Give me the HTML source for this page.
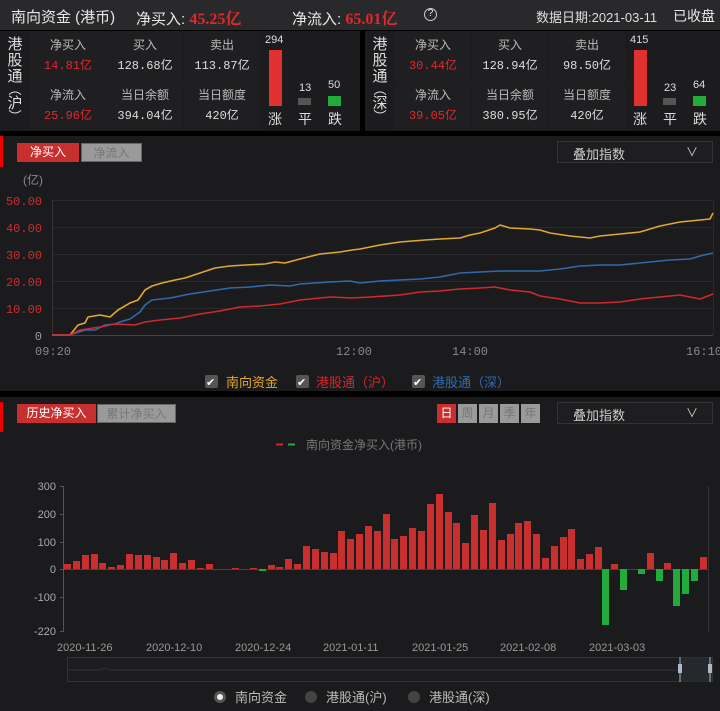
<!DOCTYPE html>
<html><head><meta charset="utf-8"><style>
*{margin:0;padding:0;box-sizing:border-box}
body{width:720px;height:711px;background:#000;font-family:"Liberation Sans","Noto Sans CJK SC",sans-serif;color:#ccc;position:relative;overflow:hidden}
.a{position:absolute;white-space:nowrap}
.top{left:0;top:0;width:720px;height:30px;background:#29292b;font-size:15px;color:#e8e8e8}
.blk{top:31px;height:100px;background:#1c1c1e}
.cell{position:absolute;width:76px;height:49px;background:#1f1f21;text-align:center;font-size:12px;color:#bbb}
.cell div:first-child{margin-top:5px}
.cell .v{font-family:"Liberation Mono","Noto Sans CJK SC",monospace;font-size:12px;color:#ddd;margin-top:3px}
.red{color:#e0282d!important}
.vl{font-size:15px;color:#ddd;width:30px;height:100px;background:#1c1c1e;text-align:center;padding-top:6px;line-height:16px;white-space:normal}
.vl span{display:block;height:16px}
.vl .p{font-size:13px;line-height:10px;height:11px}
.sec{left:0;width:720px;background:#1b1b1d}
.btn{position:absolute;height:19px;font-size:12px;text-align:center;line-height:19px}
</style></head><body>
<div class="a top">
 <span class="a" style="left:11px;top:6px">南向资金 (港币)</span>
 <span class="a" style="left:136px;top:6px">净买入: <b style="color:#e0282d;font-family:'Liberation Serif','Noto Serif CJK SC',serif;font-size:16px">45.25亿</b></span>
 <span class="a" style="left:292px;top:6px">净流入: <b style="color:#e0282d;font-family:'Liberation Serif','Noto Serif CJK SC',serif;font-size:16px">65.01亿</b></span>
 <span class="a" style="left:424px;top:8px;width:13px;height:13px;border:1.5px solid #ccc;border-radius:50%;font-size:10px;line-height:10px;text-align:center">?</span>
 <span class="a" style="left:536px;top:7px;font-size:13px;color:#ddd">数据日期:2021-03-11</span>
 <span class="a" style="left:673px;top:6px;font-size:14px">已收盘</span>
</div>

<div class="a blk" style="left:0;width:360px">
 <div class="a vl" style="left:0;top:0"><span>港</span><span>股</span><span>通</span><span class="p">︵</span><span>沪</span><span class="p">︶</span></div>
 <div class="cell" style="left:30px;top:0"><div>净买入</div><div class="v red">14.81亿</div></div>
 <div class="cell" style="left:107px;top:0"><div>买入</div><div class="v">128.68亿</div></div>
 <div class="cell" style="left:184px;top:0"><div>卖出</div><div class="v">113.87亿</div></div>
 <div class="cell" style="left:30px;top:50px"><div>净流入</div><div class="v red">25.96亿</div></div>
 <div class="cell" style="left:107px;top:50px"><div>当日余额</div><div class="v">394.04亿</div></div>
 <div class="cell" style="left:184px;top:50px"><div>当日额度</div><div class="v">420亿</div></div>
 <span class="a" style="left:265px;top:3px;font-size:11px;color:#ddd">294</span>
 <div class="a" style="left:269px;top:19px;width:13px;height:56px;background:#e0302f"></div>
 <span class="a" style="left:268px;top:78px;font-size:14px;color:#ddd">涨</span>
 <span class="a" style="left:299px;top:51px;font-size:11px;color:#ddd">13</span>
 <div class="a" style="left:298px;top:67px;width:13px;height:7px;background:#555"></div>
 <span class="a" style="left:298px;top:78px;font-size:14px;color:#ddd">平</span>
 <span class="a" style="left:328px;top:48px;font-size:11px;color:#ddd">50</span>
 <div class="a" style="left:328px;top:65px;width:13px;height:10px;background:#22aa3a"></div>
 <span class="a" style="left:328px;top:78px;font-size:14px;color:#ddd">跌</span>
</div>

<div class="a blk" style="left:365px;width:355px">
 <div class="a vl" style="left:0;top:0"><span>港</span><span>股</span><span>通</span><span class="p">︵</span><span>深</span><span class="p">︶</span></div>
 <div class="cell" style="left:30px;top:0"><div>净买入</div><div class="v red">30.44亿</div></div>
 <div class="cell" style="left:107px;top:0"><div>买入</div><div class="v">128.94亿</div></div>
 <div class="cell" style="left:184px;top:0"><div>卖出</div><div class="v">98.50亿</div></div>
 <div class="cell" style="left:30px;top:50px"><div>净流入</div><div class="v red">39.05亿</div></div>
 <div class="cell" style="left:107px;top:50px"><div>当日余额</div><div class="v">380.95亿</div></div>
 <div class="cell" style="left:184px;top:50px"><div>当日额度</div><div class="v">420亿</div></div>
 <span class="a" style="left:265px;top:3px;font-size:11px;color:#ddd">415</span>
 <div class="a" style="left:269px;top:19px;width:13px;height:56px;background:#e0302f"></div>
 <span class="a" style="left:268px;top:78px;font-size:14px;color:#ddd">涨</span>
 <span class="a" style="left:299px;top:51px;font-size:11px;color:#ddd">23</span>
 <div class="a" style="left:298px;top:67px;width:13px;height:7px;background:#555"></div>
 <span class="a" style="left:298px;top:78px;font-size:14px;color:#ddd">平</span>
 <span class="a" style="left:328px;top:48px;font-size:11px;color:#ddd">64</span>
 <div class="a" style="left:328px;top:65px;width:13px;height:10px;background:#22aa3a"></div>
 <span class="a" style="left:328px;top:78px;font-size:14px;color:#ddd">跌</span>
</div>

<div class="a sec" style="top:136px;height:255px">
 <div class="a" style="left:0;top:0;width:3px;height:31px;background:#e00"></div>
 <div class="btn" style="left:17px;top:7px;width:62px;background:#c8302f;color:#fff">净买入</div>
 <div class="btn" style="left:81px;top:7px;width:61px;background:#9a9a9a;color:#777;border:1px solid #666">净流入</div>
 <div class="a" style="left:557px;top:5px;width:156px;height:22px;background:#1e1e20;border:1px solid #333;font-size:13px;color:#ccc;padding:2px 0 0 15px">叠加指数<span style="position:absolute;right:14px;top:1px;font-size:12px">∨</span></div>
</div>
<div class="a sec" style="top:397px;height:314px">
 <div class="a" style="left:0;top:5px;width:3px;height:30px;background:#e00"></div>
 <div class="btn" style="left:17px;top:7px;width:79px;background:#c8302f;color:#fff">历史净买入</div>
 <div class="btn" style="left:97px;top:7px;width:79px;background:#9a9a9a;color:#777;border:1px solid #666">累计净买入</div>
 <div class="btn" style="left:437px;top:7px;width:19px;background:#c8302f;color:#fff">日</div>
 <div class="btn" style="left:458px;top:7px;width:19px;background:#9a9a9a;color:#777">周</div>
 <div class="btn" style="left:479px;top:7px;width:19px;background:#9a9a9a;color:#777">月</div>
 <div class="btn" style="left:500px;top:7px;width:19px;background:#9a9a9a;color:#777">季</div>
 <div class="btn" style="left:521px;top:7px;width:19px;background:#9a9a9a;color:#777">年</div>
 <div class="a" style="left:557px;top:5px;width:156px;height:22px;background:#1e1e20;border:1px solid #333;font-size:13px;color:#ccc;padding:2px 0 0 15px">叠加指数<span style="position:absolute;right:14px;top:1px;font-size:12px">∨</span></div>
</div>

<svg class="a" style="left:0;top:0" width="720" height="711" font-family="Liberation Sans, Noto Sans CJK SC, sans-serif">
 <g stroke="#2a2a2c" stroke-width="1">
  <line x1="52" y1="200.5" x2="713" y2="200.5"/><line x1="52" y1="227.5" x2="713" y2="227.5"/><line x1="52" y1="254.5" x2="713" y2="254.5"/><line x1="52" y1="281.5" x2="713" y2="281.5"/><line x1="52" y1="308.5" x2="713" y2="308.5"/>
  <line x1="713.5" y1="200" x2="713.5" y2="335"/>
 </g>
 <line x1="52.5" y1="200" x2="52.5" y2="335" stroke="#333"/>
 <line x1="52" y1="335.5" x2="713" y2="335.5" stroke="#444"/>
 <g font-size="12" fill="#c8302f" font-family="Liberation Mono, monospace">
  <text x="42" y="205" text-anchor="end">50.00</text><text x="42" y="232" text-anchor="end">40.00</text><text x="42" y="259" text-anchor="end">30.00</text><text x="42" y="286" text-anchor="end">20.00</text><text x="42" y="313" text-anchor="end">10.00</text>
  <text x="42" y="340" text-anchor="end" fill="#999">0</text>
 </g>
 <text x="23" y="184" font-size="12" fill="#888">(亿)</text>
 <g font-size="12" fill="#888" font-family="Liberation Mono, monospace">
  <text x="35" y="355">09:20</text><text x="336" y="355">12:00</text><text x="452" y="355">14:00</text><text x="686" y="355">16:10</text>
 </g>
 <g fill="none" stroke-width="1.6" stroke-linejoin="round">
  <polyline stroke="#e0a830" points="52,335 70,335 78,325 85,323 88,317 100,315 110,317 118,310 130,303 138,300 145,290 152,286 162,283 175,280 185,278 200,273 215,268 230,266 245,265 265,264 275,262 285,263 300,259 320,254 340,252 352,250 360,249 380,245 400,242 425,240 440,239 460,238 470,235 480,233 495,228 500,225 510,228 530,229 540,230 550,233 570,236 580,237 590,238 600,236 620,234 640,232 660,226 680,222 690,221 700,220 710,219 713,213"/>
  <polyline stroke="#2f6aad" points="52,335 70,335 85,330 95,330 105,325 115,324 120,322 130,319 140,312 145,305 152,300 170,298 190,294 210,291 230,288 250,287 270,285 290,286 300,284 330,282 350,281 360,283 380,281 400,280 420,279 440,277 460,273 500,271 540,271 560,269 580,266 600,265 620,265 650,262 670,260 690,259 700,256 713,253"/>
  <polyline stroke="#d0282d" points="52,335 70,335 80,330 100,327 115,324 135,325 145,322 160,320 180,318 200,314 220,311 240,307 260,306 280,304 300,300 330,297 352,298 370,297 400,295 420,292 440,291 460,289 480,288 495,287 510,290 530,292 540,296 560,299 580,303 600,303 620,302 640,299 660,297 680,295 690,297 700,299 713,294"/>
 </g>
 <g font-size="13">
  <rect x="205" y="375" width="13" height="13" rx="2" fill="#555"/><text x="206" y="386" fill="#fff" font-size="11">✔</text><text x="226" y="387" fill="#e0a830">南向资金</text>
  <rect x="296" y="375" width="13" height="13" rx="2" fill="#555"/><text x="297" y="386" fill="#fff" font-size="11">✔</text><text x="316" y="387" fill="#d0282d">港股通（沪）</text>
  <rect x="412" y="375" width="13" height="13" rx="2" fill="#555"/><text x="413" y="386" fill="#fff" font-size="11">✔</text><text x="432" y="387" fill="#2f6aad">港股通（深）</text>
 </g>
 <line x1="276" y1="444.5" x2="283" y2="444.5" stroke="#d0282d" stroke-width="2"/><line x1="288" y1="444.5" x2="295" y2="444.5" stroke="#22aa3a" stroke-width="2"/>
 <text x="306" y="449" font-size="12" fill="#777">南向资金净买入(港币)</text>
 <g stroke="#555"><line x1="63.5" y1="486" x2="63.5" y2="632"/>
  <line x1="60" y1="486.5" x2="64" y2="486.5"/><line x1="60" y1="514.5" x2="64" y2="514.5"/><line x1="60" y1="542.5" x2="64" y2="542.5"/><line x1="60" y1="569.5" x2="64" y2="569.5"/><line x1="60" y1="597.5" x2="64" y2="597.5"/><line x1="60" y1="631.5" x2="64" y2="631.5"/>
  <line x1="708.5" y1="486" x2="708.5" y2="632" stroke="#333"/>
 </g>
 <line x1="64" y1="569.5" x2="708" y2="569.5" stroke="#444"/>
 <g font-size="11" fill="#aaa" text-anchor="end">
  <text x="56" y="490">300</text><text x="56" y="518">200</text><text x="56" y="546">100</text><text x="56" y="573">0</text><text x="56" y="601">-100</text><text x="56" y="635">-220</text>
 </g>
 <g font-size="11" fill="#999">
  <text x="57" y="651">2020-11-26</text><text x="146" y="651">2020-12-10</text><text x="235" y="651">2020-12-24</text><text x="323" y="651">2021-01-11</text><text x="412" y="651">2021-01-25</text><text x="500" y="651">2021-02-08</text><text x="589" y="651">2021-03-03</text>
 </g>
 <rect x="67.5" y="657.5" width="645" height="24" fill="#1c1d20" stroke="#333"/>
 <rect x="681" y="657.5" width="31" height="24" fill="#25282d"/>
 <polyline fill="none" stroke="#333" points="68,670 100,670 105,668 110,670 680,670"/>
 <rect x="678" y="664" width="4" height="9" fill="#aab8c8"/><line x1="680" y1="657" x2="680" y2="682" stroke="#aab8c8"/>
 <rect x="708" y="664" width="4" height="9" fill="#aab8c8"/><line x1="710" y1="657" x2="710" y2="682" stroke="#aab8c8"/>
 <circle cx="220" cy="697" r="6" fill="#555"/><circle cx="220" cy="697" r="3" fill="#eee"/>
 <text x="235" y="702" font-size="13" fill="#bbb">南向资金</text>
 <circle cx="311" cy="697" r="6" fill="#444"/><text x="326" y="702" font-size="13" fill="#bbb">港股通(沪)</text>
 <circle cx="414" cy="697" r="6" fill="#444"/><text x="429" y="702" font-size="13" fill="#bbb">港股通(深)</text>
 <g>
 <rect x="64" y="564" width="7" height="5" fill="#c8302f"/><rect x="73" y="561" width="7" height="8" fill="#c8302f"/><rect x="82" y="555" width="7" height="14" fill="#c8302f"/><rect x="91" y="554" width="7" height="15" fill="#c8302f"/><rect x="99" y="563" width="7" height="6" fill="#c8302f"/><rect x="108" y="567" width="7" height="2" fill="#c8302f"/><rect x="117" y="565" width="7" height="4" fill="#c8302f"/><rect x="126" y="554" width="7" height="15" fill="#c8302f"/><rect x="135" y="555" width="7" height="14" fill="#c8302f"/><rect x="144" y="555" width="7" height="14" fill="#c8302f"/><rect x="153" y="557" width="7" height="12" fill="#c8302f"/><rect x="161" y="560" width="7" height="9" fill="#c8302f"/><rect x="170" y="553" width="7" height="16" fill="#c8302f"/><rect x="179" y="563" width="7" height="6" fill="#c8302f"/><rect x="188" y="560" width="7" height="9" fill="#c8302f"/><rect x="197" y="568" width="7" height="1" fill="#c8302f"/><rect x="206" y="564" width="7" height="5" fill="#c8302f"/><rect x="232" y="568" width="7" height="1" fill="#c8302f"/><rect x="250" y="568" width="7" height="1" fill="#c8302f"/><rect x="259" y="569" width="7" height="2" fill="#22aa3a"/><rect x="268" y="565" width="7" height="4" fill="#c8302f"/><rect x="276" y="567" width="7" height="2" fill="#c8302f"/><rect x="285" y="559" width="7" height="10" fill="#c8302f"/><rect x="294" y="564" width="7" height="5" fill="#c8302f"/><rect x="303" y="546" width="7" height="23" fill="#c8302f"/><rect x="312" y="549" width="7" height="20" fill="#c8302f"/><rect x="321" y="552" width="7" height="17" fill="#c8302f"/><rect x="330" y="553" width="7" height="16" fill="#c8302f"/><rect x="338" y="531" width="7" height="38" fill="#c8302f"/><rect x="347" y="539" width="7" height="30" fill="#c8302f"/><rect x="356" y="534" width="7" height="35" fill="#c8302f"/><rect x="365" y="526" width="7" height="43" fill="#c8302f"/><rect x="374" y="531" width="7" height="38" fill="#c8302f"/><rect x="383" y="514" width="7" height="55" fill="#c8302f"/><rect x="391" y="539" width="7" height="30" fill="#c8302f"/><rect x="400" y="536" width="7" height="33" fill="#c8302f"/><rect x="409" y="528" width="7" height="41" fill="#c8302f"/><rect x="418" y="531" width="7" height="38" fill="#c8302f"/><rect x="427" y="504" width="7" height="65" fill="#c8302f"/><rect x="436" y="494" width="7" height="75" fill="#c8302f"/><rect x="445" y="512" width="7" height="57" fill="#c8302f"/><rect x="453" y="523" width="7" height="46" fill="#c8302f"/><rect x="462" y="543" width="7" height="26" fill="#c8302f"/><rect x="471" y="515" width="7" height="54" fill="#c8302f"/><rect x="480" y="530" width="7" height="39" fill="#c8302f"/><rect x="489" y="503" width="7" height="66" fill="#c8302f"/><rect x="498" y="540" width="7" height="29" fill="#c8302f"/><rect x="507" y="534" width="7" height="35" fill="#c8302f"/><rect x="515" y="523" width="7" height="46" fill="#c8302f"/><rect x="524" y="521" width="7" height="48" fill="#c8302f"/><rect x="533" y="534" width="7" height="35" fill="#c8302f"/><rect x="542" y="558" width="7" height="11" fill="#c8302f"/><rect x="551" y="546" width="7" height="23" fill="#c8302f"/><rect x="560" y="537" width="7" height="32" fill="#c8302f"/><rect x="568" y="529" width="7" height="40" fill="#c8302f"/><rect x="577" y="559" width="7" height="10" fill="#c8302f"/><rect x="586" y="554" width="7" height="15" fill="#c8302f"/><rect x="595" y="547" width="7" height="22" fill="#c8302f"/><rect x="602" y="569" width="7" height="56" fill="#22aa3a"/><rect x="611" y="564" width="7" height="5" fill="#c8302f"/><rect x="620" y="569" width="7" height="21" fill="#22aa3a"/><rect x="638" y="569" width="7" height="5" fill="#22aa3a"/><rect x="647" y="553" width="7" height="16" fill="#c8302f"/><rect x="656" y="569" width="7" height="12" fill="#22aa3a"/><rect x="664" y="563" width="7" height="6" fill="#c8302f"/><rect x="673" y="569" width="7" height="37" fill="#22aa3a"/><rect x="682" y="569" width="7" height="25" fill="#22aa3a"/><rect x="691" y="569" width="7" height="12" fill="#22aa3a"/><rect x="700" y="557" width="7" height="12" fill="#c8302f"/>
 </g>
</svg>
</body></html>
